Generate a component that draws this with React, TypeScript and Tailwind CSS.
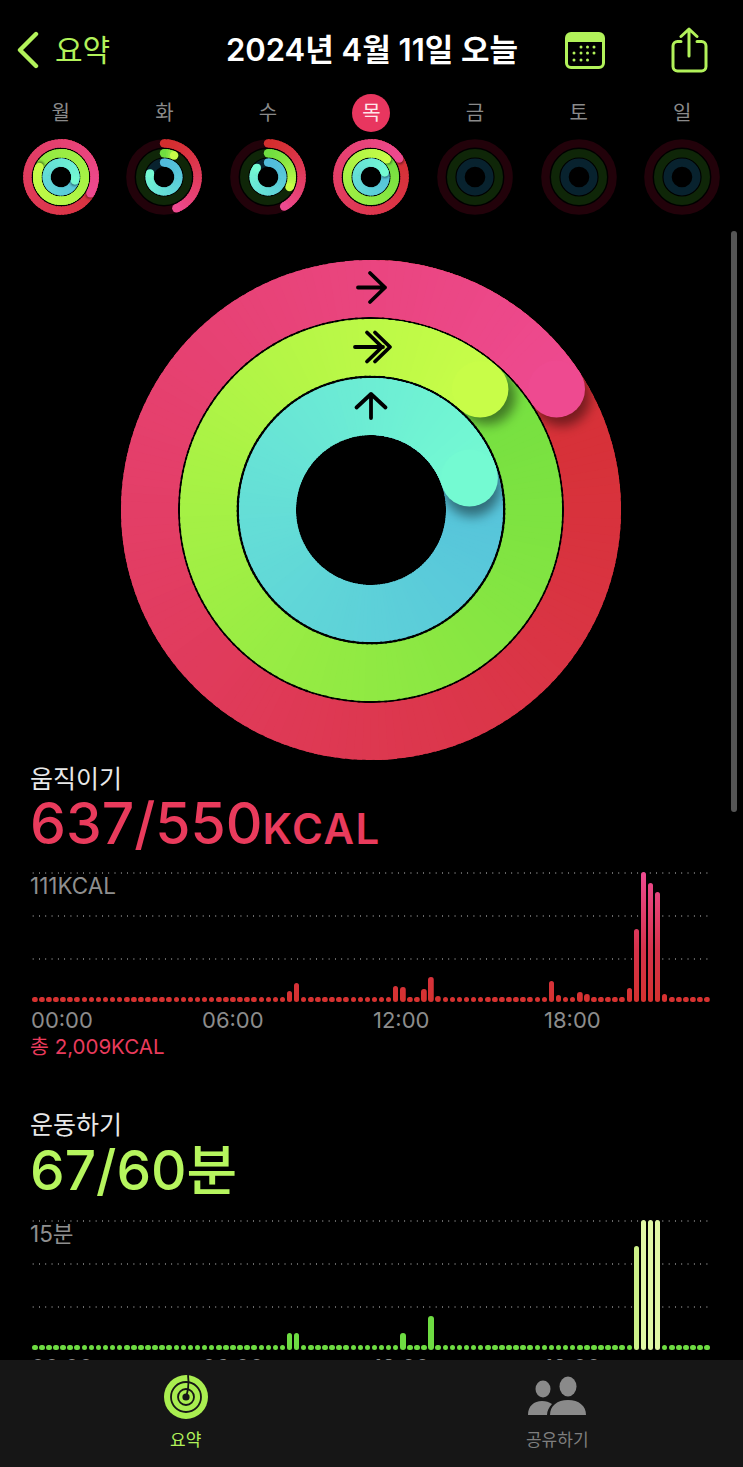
import React from 'react';

type RGB = [number, number, number];

interface RingSpec {
  r: number;
  w: number;
  value: number;
  from: RGB;
  to: RGB;
  track: string;
}

const RED_FROM: RGB = [212, 46, 46];
const RED_TO: RGB = [238, 74, 144];
const GREEN_FROM: RGB = [112, 222, 64];
const GREEN_TO: RGB = [200, 253, 72];
const BLUE_FROM: RGB = [82, 188, 220];
const BLUE_TO: RGB = [116, 250, 210];

const point = (r: number, deg: number) => {
  const a = (deg * Math.PI) / 180;
  return { x: r * Math.sin(a), y: -r * Math.cos(a) };
};

const mix = (a: RGB, b: RGB, t: number) =>
  `rgb(${a.map((v, i) => Math.round(v + (b[i] - v) * Math.pow(t, 1.25))).join(',')})`;

function Ring({ id, spec, step }: { id: string; spec: RingSpec; step: number }) {
  const { r, w, value, from, to, track } = spec;
  const end = value * 360;
  const back = ((w / 2 / r) * 180 / Math.PI) * 2;
  const split = value > 1 ? end - back : end;

  const segment = (a: number) => {
    const b = Math.min(a + step * 1.6, end);
    const p1 = point(r, a);
    const p2 = point(r, b);
    return (
      <path
        key={a}
        d={`M${p1.x} ${p1.y}A${r} ${r} 0 0 1 ${p2.x} ${p2.y}`}
        fill="none"
        stroke={mix(from, to, end ? a / end : 0)}
        strokeWidth={w}
      />
    );
  };

  const angles: number[] = [];
  for (let a = 0; a < end; a += step) angles.push(a);

  const cap = point(r, end);
  const shadow = point(r, end + back * 0.18);
  const o = r + w / 2;
  const i = r - w / 2;

  return (
    <g>
      <circle r={r} fill="none" stroke={track} strokeWidth={w} />
      {value > 0 && (
        <>
          <circle cx={0} cy={-r} r={w / 2} fill={mix(from, to, 0)} />
          {angles.filter(a => a < split).map(segment)}
          {value > 1 && (
            <>
              <defs>
                <clipPath id={`${id}-band`}>
                  <path
                    clipRule="evenodd"
                    d={`M${-o} 0a${o} ${o} 0 1 0 ${o * 2} 0a${o} ${o} 0 1 0 ${-o * 2} 0zM${-i} 0a${i} ${i} 0 1 0 ${i * 2} 0a${i} ${i} 0 1 0 ${-i * 2} 0z`}
                  />
                </clipPath>
                <filter id={`${id}-blur`} x="-50%" y="-50%" width="200%" height="200%">
                  <feGaussianBlur stdDeviation={w * 0.1} />
                </filter>
              </defs>
              <g clipPath={`url(#${id}-band)`}>
                <circle
                  cx={shadow.x}
                  cy={shadow.y}
                  r={w / 2}
                  fill="#000"
                  fillOpacity={0.45}
                  filter={`url(#${id}-blur)`}
                />
              </g>
              {angles.filter(a => a >= split).map(segment)}
            </>
          )}
          <circle cx={cap.x} cy={cap.y} r={w / 2} fill={mix(from, to, 1)} />
        </>
      )}
    </g>
  );
}

const DAYS = [
  { label: '월', move: 1.33, exercise: 1.82, stand: 1.29 },
  { label: '화', move: 0.44, exercise: 0.07, stand: 0.79 },
  { label: '수', move: 0.42, exercise: 0.32, stand: 0.86 },
  { label: '목', move: 1.158, exercise: 1.117, stand: 1.2, today: true },
  { label: '금', move: 0, exercise: 0, stand: 0 },
  { label: '토', move: 0, exercise: 0, stand: 0 },
  { label: '일', move: 0, exercise: 0, stand: 0 },
];

function DayRings({ day, index }: { day: (typeof DAYS)[number]; index: number }) {
  return (
    <svg viewBox="-39 -39 78 78" className="h-[78px] w-[78px]">
      <Ring id={`d${index}m`} step={5} spec={{ r: 33.6, w: 8.4, value: day.move, from: RED_FROM, to: RED_TO, track: '#22020a' }} />
      <Ring id={`d${index}e`} step={5} spec={{ r: 23.8, w: 8.4, value: day.exercise, from: GREEN_FROM, to: GREEN_TO, track: '#0f2608' }} />
      <Ring id={`d${index}s`} step={5} spec={{ r: 14.4, w: 8.2, value: day.stand, from: BLUE_FROM, to: BLUE_TO, track: '#08222e' }} />
    </svg>
  );
}

function MainRings() {
  return (
    <svg viewBox="-252 -252 504 504" className="h-[504px] w-[504px]">
      <Ring id="main-m" step={2} spec={{ r: 221.5, w: 57, value: 1.158, from: RED_FROM, to: RED_TO, track: '#22020a' }} />
      <Ring id="main-e" step={2} spec={{ r: 162.75, w: 56.5, value: 1.117, from: GREEN_FROM, to: GREEN_TO, track: '#0f2608' }} />
      <Ring id="main-s" step={2} spec={{ r: 103.5, w: 57, value: 1.2, from: BLUE_FROM, to: BLUE_TO, track: '#08222e' }} />
      <g fill="none" stroke="#000" strokeWidth={3.8} strokeLinecap="round" strokeLinejoin="round">
        <path d="M-13 -222.5H14M-1 -237L14 -222.5L-1 -208" />
        <path d="M-16 -163H12M-4 -177.5L11 -163L-4 -148.5M4 -177.5L19 -163L4 -148.5" />
        <path d="M0 -92V-116M-14.5 -102.5L0 -116L14.5 -102.5" />
      </g>
    </svg>
  );
}

function Chart({
  label,
  heights,
  barClass,
}: {
  label: string;
  heights: Record<number, number>;
  barClass: (i: number) => string;
}) {
  return (
    <div className="relative mx-[30px] h-[130px] w-[682px]">
      <div className="absolute inset-x-0 top-0 flex flex-col gap-[41px]">
        {[0, 1, 2].map(n => (
          <div key={n} className="h-[2px] bg-[radial-gradient(circle,#6f6f6f_0.8px,transparent_1px)] bg-[length:6.3px_2px]" />
        ))}
      </div>
      <div className="absolute left-0 top-[1px] text-[22.5px] leading-[26px] text-[#8f8f8f]">{label}</div>
      <div className="absolute bottom-0 left-[2px] right-[1px] flex items-end justify-between">
        {Array.from({ length: 96 }, (_, i) => (
          <div
            key={i}
            className={`w-[5.5px] rounded-full ${barClass(i)}`}
            style={{ height: heights[i] ?? 5.5 }}
          />
        ))}
      </div>
    </div>
  );
}

const MOVE_BARS: Record<number, number> = {
  36: 11, 37: 19, 51: 16, 52: 15, 55: 13, 56: 25, 57: 6,
  73: 21, 74: 7, 77: 10, 78: 8, 84: 14, 85: 73, 86: 130, 87: 119, 88: 110, 89: 8,
};

const EXERCISE_BARS: Record<number, number> = {
  36: 17, 37: 17, 52: 17, 56: 34, 85: 104, 86: 130, 87: 130, 88: 130,
};

const TIMES = ['00:00', '06:00', '12:00', '18:00'];

function Times() {
  return (
    <div className="ml-[31px] flex text-[22px] leading-[26px] text-[#8c8c8c]">
      {TIMES.map(t => (
        <div key={t} className="w-[171px]">{t}</div>
      ))}
    </div>
  );
}

export default function App() {
  return (
    <div className="relative h-[1467px] w-[743px] overflow-hidden bg-black font-[Inter,'Noto_Sans_CJK_KR',sans-serif] text-white">
      {/* Header */}
      <div className="flex h-[94px] items-center pt-[6px]">
        <div className="ml-[16px] flex w-[210px] items-center gap-[15px] text-[#b2f25a]">
          <svg viewBox="0 0 24 38" className="h-[38px] w-[24px]" fill="none" stroke="currentColor" strokeWidth={4.4} strokeLinecap="round" strokeLinejoin="round">
            <path d="M20 3L4 19L20 35" />
          </svg>
          <span className="text-[30px] leading-[36px]">요약</span>
        </div>
        <div className="w-[339px] whitespace-nowrap text-[31px] font-semibold leading-[36px]">2024년 4월 11일 오늘</div>
        <svg viewBox="0 0 40 37" className="h-[37px] w-[40px]" fill="none">
          <rect x={1.5} y={1.5} width={37} height={34} rx={4.5} stroke="#b2f25a" strokeWidth={3} />
          <path d="M1.5 10V6a4.5 4.5 0 0 1 4.5-4.5h28a4.5 4.5 0 0 1 4.5 4.5v4z" fill="#b2f25a" />
          <g fill="#b2f25a">
            {[[16, 15], [22.5, 15], [29, 15], [9, 21], [16, 21], [22.5, 21], [29, 21], [9, 28], [16, 28], [22.5, 28]].map(([x, y]) => (
              <circle key={`${x}-${y}`} cx={x} cy={y} r={1.5} />
            ))}
          </g>
        </svg>
        <svg viewBox="0 0 37 46" className="ml-[66px] h-[46px] w-[37px]" fill="none" stroke="#b2f25a" strokeWidth={3} strokeLinecap="round" strokeLinejoin="round">
          <path d="M10 14.5H6.5a4.5 4.5 0 0 0-4.5 4.5v20.5a4.5 4.5 0 0 0 4.5 4.5h24a4.5 4.5 0 0 0 4.5-4.5V19a4.5 4.5 0 0 0-4.5-4.5H26" />
          <path d="M18 29V2M10 9.5L18 2L26 9.5" />
        </svg>
      </div>

      {/* Week */}
      <div className="grid grid-cols-7 px-[9px]">
        {DAYS.map(d => (
          <div key={d.label} className="flex h-[38px] items-center justify-center">
            <div className={`flex h-[38px] w-[38px] items-center justify-center rounded-full text-[20px] ${d.today ? 'bg-[#e8365f] text-[#ffe6ea]' : 'text-[#8a8a8a]'}`}>
              {d.label}
            </div>
          </div>
        ))}
        {DAYS.map((d, i) => (
          <div key={d.label} className="mt-[6px] flex justify-center">
            <DayRings day={d} index={i} />
          </div>
        ))}
      </div>

      {/* Activity rings */}
      <div className="mt-[42px] flex justify-center pr-[1px]">
        <MainRings />
      </div>

      {/* Move */}
      <div className="ml-[30px] mt-[1px] h-[32px] text-[25px] leading-[32px] text-[#e8e8e8]">움직이기</div>
      <div className="ml-[30px] flex h-[58px] items-baseline whitespace-nowrap leading-[58px] text-[#e93b5c]">
        <span className="text-[57px] font-medium">637/550</span>
        <span className="text-[42px] font-semibold tracking-[1.5px]">KCAL</span>
      </div>
      <div className="mt-[19px]">
        <Chart
          label="111KCAL"
          heights={MOVE_BARS}
          barClass={() => 'bg-[linear-gradient(to_top,#d6322f,#d6324a_40%,#ee4a90)] bg-[length:100%_130px] bg-bottom'}
        />
      </div>
      <div className="mt-[5px]">
        <Times />
      </div>
      <div className="ml-[30px] mt-[2px] text-[20.5px] leading-[24px] text-[#e93b5c]">총 2,009KCAL</div>

      {/* Exercise */}
      <div className="ml-[30px] mt-[50px] h-[32px] text-[25px] leading-[32px] text-[#e8e8e8]">운동하기</div>
      <div className="ml-[30px] h-[58px] whitespace-nowrap text-[55px] font-medium leading-[58px] text-[#b6f55e]">67/60분</div>
      <div className="mt-[21px]">
        <Chart
          label="15분"
          heights={EXERCISE_BARS}
          barClass={i => (i === 85 ? 'bg-[#cdf088]' : i > 85 && i < 89 ? 'bg-[#e0f7a4]' : 'bg-[#6edc42]')}
        />
      </div>
      <div className="mt-[4px]">
        <Times />
      </div>

      {/* Scroll indicator */}
      <div className="absolute right-[6px] top-[231px] h-[581px] w-[6px] rounded-full bg-[#555555]" />

      {/* Tab bar */}
      <div className="absolute inset-x-0 bottom-0 grid h-[107px] grid-cols-2 bg-[#161616]">
        <div className="flex flex-col items-center pt-[14px]">
          <svg viewBox="-23 -23 46 46" className="h-[46px] w-[46px]" fill="none">
            <circle r={22} fill="#a9ee50" />
            <circle r={15} stroke="#161616" strokeWidth={1.8} />
            <circle r={8} stroke="#161616" strokeWidth={1.8} />
            <circle r={3.6} fill="#161616" />
            <path d="M2 -22C3 -16 2.5 -12 2 -8C1.5 -5 1 -3 0 -1" stroke="#161616" strokeWidth={1.8} />
          </svg>
          <span className="mt-[8px] text-[17px] leading-[24px] text-[#b2f25a]">요약</span>
        </div>
        <div className="flex flex-col items-center pt-[16px]">
          <svg viewBox="0 0 60 40" className="h-[40px] w-[60px]">
            <g fill="#8a8a8a">
              <ellipse cx={16} cy={13} rx={7.5} ry={8.5} />
              <ellipse cx={41} cy={10.5} rx={8.5} ry={10} />
              <path d="M1 39C1 30 7 25 15 25C19 25 22 26 25 28C22 31 20 35 20 39z" />
              <path d="M23 39C23 30 30 24 41 24C52 24 59 30 59 39z" />
            </g>
          </svg>
          <span className="mt-[12px] text-[17px] leading-[24px] text-[#7e7e7e]">공유하기</span>
        </div>
      </div>
    </div>
  );
}
